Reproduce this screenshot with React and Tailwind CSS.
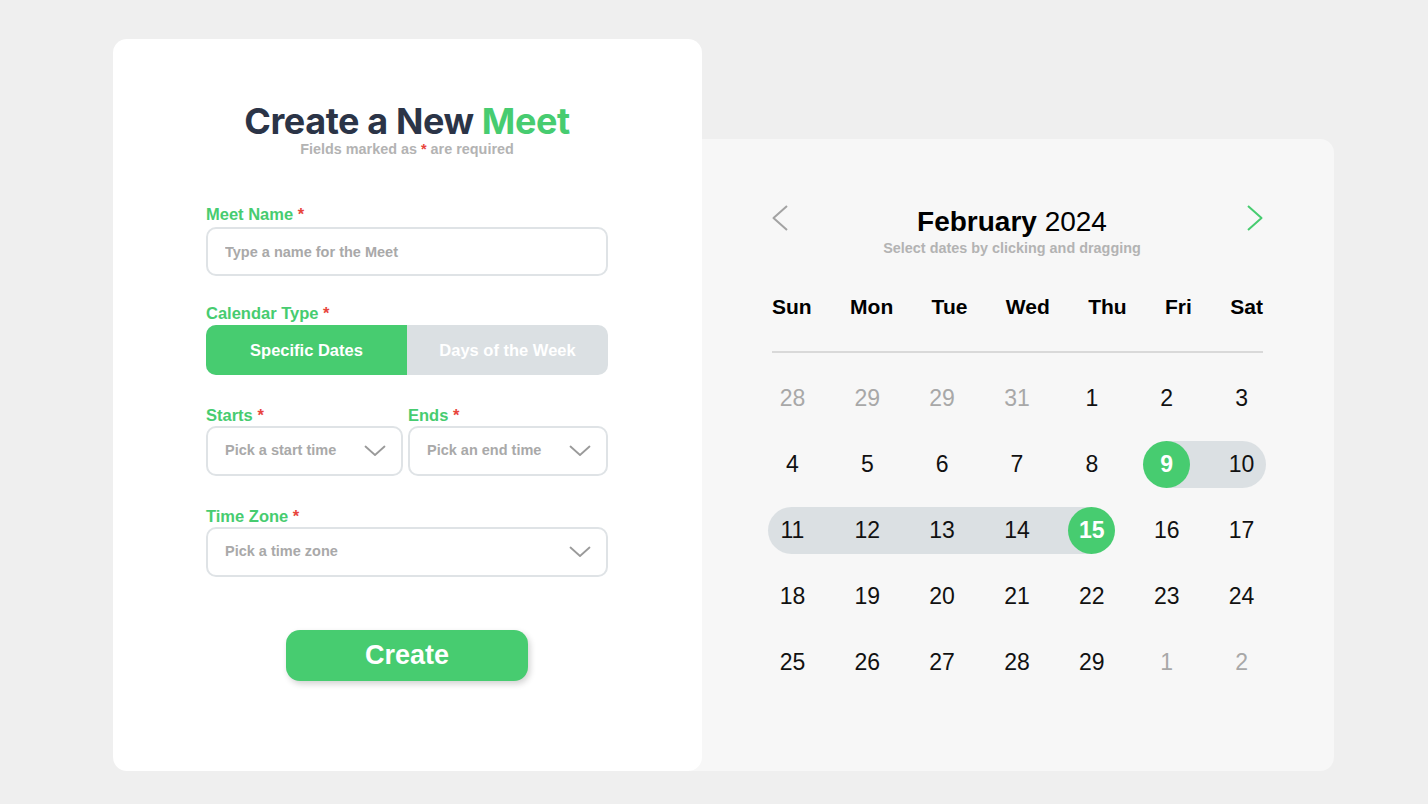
import React from 'react';

const GREEN = '#47cc70';

function Chevron({ className }) {
  return (
    <svg className={className} width="22" height="12" viewBox="0 0 22 12" fill="none">
      <polyline points="1.5,1.5 11,10 20.5,1.5" stroke="currentColor" strokeWidth="1.8" strokeLinecap="round" strokeLinejoin="round" />
    </svg>
  );
}

function Label({ children }) {
  return (
    <div className="text-[16.5px] leading-[20px] font-bold text-[#47cc70]">
      {children} <span className="text-[#e8453c]">*</span>
    </div>
  );
}

function SelectBox({ placeholder }) {
  return (
    <button
      type="button"
      className="flex h-[50px] w-full items-center justify-between rounded-[10px] border-2 border-[#dfe3e6] bg-white pl-[17px] pr-[15px] text-[14.5px] font-bold text-[#a9a9a9]"
    >
      <span>{placeholder}</span>
      <Chevron className="text-[#9a9a9a]" />
    </button>
  );
}

function CreateForm() {
  return (
    <div className="relative z-10 h-[732px] w-[589px] shrink-0 rounded-[14px] bg-white pl-[93px] pr-[94px] pt-[62px]">
      {/* Heading */}
      <div className="text-center">
        <h1 className="font-['Inter',sans-serif] text-[36px] leading-[40px] font-bold tracking-[-0.4px] text-[#2b3447]">
          Create a New <span className="text-[#47cc70]">Meet</span>
        </h1>
        <p className="text-[14.4px] leading-[16px] font-bold text-[#b3b3b3]">
          Fields marked as <span className="text-[#e8453c]">*</span> are required
        </p>
      </div>

      <form className="mt-[47px]" onSubmit={(e) => e.preventDefault()}>
        {/* Meet Name */}
        <Label>Meet Name</Label>
        <input
          type="text"
          placeholder="Type a name for the Meet"
          className="mt-[3px] h-[49px] w-full rounded-[10px] border-2 border-[#dfe3e6] px-[17px] text-[14.5px] font-bold text-[#333] placeholder:text-[#a9a9a9] focus:outline-none"
        />

        {/* Calendar Type */}
        <div className="mt-[27px]">
          <Label>Calendar Type</Label>
          <div className="mt-[2px] flex h-[50px] overflow-hidden rounded-[10px] bg-[#dbe0e3]">
            <button type="button" className="flex-1 bg-[#47cc70] text-[16.5px] font-bold text-white">
              Specific Dates
            </button>
            <button type="button" className="flex-1 text-[16.5px] font-bold text-white">
              Days of the Week
            </button>
          </div>
        </div>

        {/* Starts / Ends */}
        <div className="mt-[30px] grid grid-cols-[197px_1fr] gap-[5px]">
          <div>
            <Label>Starts</Label>
            <div className="mt-[1px]">
              <SelectBox placeholder="Pick a start time" />
            </div>
          </div>
          <div>
            <Label>Ends</Label>
            <div className="mt-[1px]">
              <SelectBox placeholder="Pick an end time" />
            </div>
          </div>
        </div>

        {/* Time Zone */}
        <div className="mt-[30px]">
          <Label>Time Zone</Label>
          <div className="mt-[1px]">
            <SelectBox placeholder="Pick a time zone" />
          </div>
        </div>

        <button
          type="submit"
          className="mx-auto mt-[53px] flex h-[51px] w-[242px] items-center justify-center rounded-[14px] bg-[#47cc70] text-[27px] font-bold text-white shadow-[2px_3px_6px_rgba(0,0,0,0.18)]"
        >
          Create
        </button>
      </form>
    </div>
  );
}

const weeks = [
  [
    { d: 28, muted: true },
    { d: 29, muted: true },
    { d: 29, muted: true },
    { d: 31, muted: true },
    { d: 1 },
    { d: 2 },
    { d: 3 },
  ],
  [
    { d: 4 },
    { d: 5 },
    { d: 6 },
    { d: 7 },
    { d: 8 },
    { d: 9, picked: true, band: 'ml-[50%]' },
    { d: 10, band: 'mr-[calc(50%_-_24px)] rounded-r-full' },
  ],
  [
    { d: 11, band: 'ml-[calc(50%_-_24px)] rounded-l-full' },
    { d: 12, band: 'w-full' },
    { d: 13, band: 'w-full' },
    { d: 14, band: 'w-full' },
    { d: 15, picked: true, band: 'mr-[50%]' },
    { d: 16 },
    { d: 17 },
  ],
  [{ d: 18 }, { d: 19 }, { d: 20 }, { d: 21 }, { d: 22 }, { d: 23 }, { d: 24 }],
  [
    { d: 25 },
    { d: 26 },
    { d: 27 },
    { d: 28 },
    { d: 29 },
    { d: 1, muted: true },
    { d: 2, muted: true },
  ],
];

const days = ['Sun', 'Mon', 'Tue', 'Wed', 'Thu', 'Fri', 'Sat'];

function DayCell({ day }) {
  return (
    <div className="grid h-[66px] items-center">
      {day.band && <div className={`col-start-1 row-start-1 h-[47px] bg-[#dbe0e3] ${day.band}`} />}
      <div className="col-start-1 row-start-1 justify-self-center">
        {day.picked ? (
          <span className="flex size-[47px] items-center justify-center rounded-full bg-[#47cc70] text-[23px] font-bold text-white">
            {day.d}
          </span>
        ) : (
          <span className={`text-[23px] ${day.muted ? 'text-[#a8a8a8]' : 'text-[#111]'}`}>{day.d}</span>
        )}
      </div>
    </div>
  );
}

function Calendar() {
  return (
    <div className="-ml-[12px] h-[632px] w-[644px] shrink-0 rounded-r-[14px] bg-[#f7f7f7] pl-[65px] pr-[55px] pt-[66px]">
      {/* Month header */}
      <div className="ml-[17px] mr-[16px] flex items-start justify-between">
        <svg width="16" height="26" viewBox="0 0 16 26" fill="none" className="text-[#a3a3a3]">
          <polyline points="15,1 1.5,13 15,25" stroke="currentColor" strokeWidth="2" strokeLinejoin="round" />
        </svg>
        <div className="mt-[1px] pr-[11px] text-center">
          <div className="text-[28px] leading-[32px] text-black">
            <span className="font-bold">February</span> 2024
          </div>
          <div className="mt-[2px] text-[14.4px] leading-[16px] font-bold text-[#b3b3b3]">
            Select dates by clicking and dragging
          </div>
        </div>
        <svg width="16" height="26" viewBox="0 0 16 26" fill="none" style={{ color: GREEN }}>
          <polyline points="1,1 14.5,13 1,25" stroke="currentColor" strokeWidth="2" strokeLinejoin="round" />
        </svg>
      </div>

      {/* Weekdays */}
      <div className="ml-[17px] mr-[16px] mt-[39px] flex justify-between text-[21px] leading-[24px] font-bold text-black">
        {days.map((d) => (
          <span key={d}>{d}</span>
        ))}
      </div>
      <div className="ml-[17px] mr-[16px] mt-[32px] h-[2px] bg-[#d9d9d9]" />

      {/* Dates */}
      <div className="mt-[12px] grid grid-cols-7">
        {weeks.map((week, wi) =>
          week.map((day, di) => <DayCell key={`${wi}-${di}`} day={day} />)
        )}
      </div>
    </div>
  );
}

export default function App() {
  return (
    <div className="min-h-[804px] w-full bg-[#efefef] pl-[113px] pt-[39px] font-['Liberation_Sans',Arial,sans-serif]">
      <div className="flex items-end">
        <CreateForm />
        <Calendar />
      </div>
    </div>
  );
}
